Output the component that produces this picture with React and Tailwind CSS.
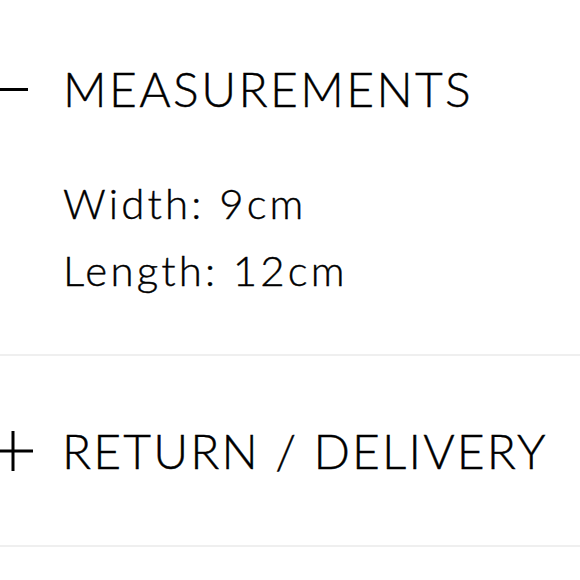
export default function App() {
  return (
    <div
      className="w-[580px] h-[580px] bg-white overflow-hidden text-black [-webkit-text-stroke:0.4px_black]"
      style={{ fontFamily: 'Lato, "Noto Sans", sans-serif' }}
    >
      <section className="pt-[65px] pb-[50px] border-b-2 border-[#efefef]">
        <div className="flex items-center">
          <span className="block w-[40px] h-[3px] bg-black ml-[-12px] mr-[35px] shrink-0" />
          <h2 className="text-[48px] leading-[48px] font-light tracking-[0.05em] whitespace-nowrap">MEASUREMENTS</h2>
        </div>
        <div className="pl-[63px] pt-[57px] text-[42px] leading-[67px] font-light tracking-[0.075em] whitespace-nowrap">
          <p>Width: 9cm</p>
          <p>Length: 12cm</p>
        </div>
      </section>
      <section className="pt-[71px] pb-[70px] border-b-2 border-[#efefef]">
        <div className="flex items-center">
          <svg width="40" height="40" viewBox="0 0 40 40" className="ml-[-7px] mr-[29px] shrink-0">
            <path d="M0 20H40M20 0V40" stroke="black" strokeWidth="3" />
          </svg>
          <h2 className="text-[48px] leading-[48px] font-light tracking-[0.045em] whitespace-nowrap">RETURN / DELIVERY</h2>
        </div>
      </section>
    </div>
  );
}
